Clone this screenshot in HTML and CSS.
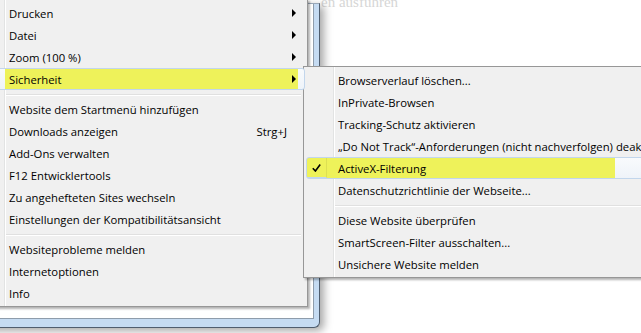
FILE: index.html
```html
<!DOCTYPE html>
<html lang="de">
<head>
  <meta charset="UTF-8" />
  <title>Extras – Sicherheit</title>
  <link rel="stylesheet" href="styles.css">
</head>
<body>
  <span class="behind">en ausführen</span>

  <!-- Fenster hinter dem Menü -->
  <div class="window"><div class="client"></div></div>

  <ul class="menu main">
    <li class="item">Drucken<span class="arrow"></span></li>
    <li class="item">Datei<span class="arrow"></span></li>
    <li class="item">Zoom (100 %)<span class="arrow"></span></li>
    <li class="item hot">Sicherheit<span class="arrow"></span></li>
    <li class="sep"></li>
    <li class="item">Website dem Startmenü hinzufügen</li>
    <li class="item">Downloads anzeigen<span class="key">Strg+J</span></li>
    <li class="item">Add-Ons verwalten</li>
    <li class="item">F12 Entwicklertools</li>
    <li class="item">Zu angehefteten Sites wechseln</li>
    <li class="item">Einstellungen der Kompatibilitätsansicht</li>
    <li class="sep"></li>
    <li class="item">Websiteprobleme melden</li>
    <li class="item">Internetoptionen</li>
    <li class="item">Info</li>
  </ul>

  <ul class="menu sub">
    <li class="item">Browserverlauf löschen...</li>
    <li class="item">InPrivate-Browsen</li>
    <li class="item">Tracking-Schutz aktivieren</li>
    <li class="item">„Do Not Track“-Anforderungen (nicht nachverfolgen) deaktivieren</li>
    <li class="item hot checked">
      <span class="check">
        <svg width="9" height="8" viewBox="0 0 9 8"><path d="M0.8 4.2 L3.4 7 L8.2 0.6" fill="none" stroke="#000" stroke-width="1.6"/></svg>
      </span>ActiveX-Filterung
    </li>
    <li class="item">Datenschutzrichtlinie der Webseite...</li>
    <li class="sep"></li>
    <li class="item">Diese Website überprüfen</li>
    <li class="item">SmartScreen-Filter ausschalten...</li>
    <li class="item">Unsichere Website melden</li>
  </ul>
</body>
</html>
```

FILE: styles.css
```css
body {
  margin: 0;
  width: 641px;
  height: 333px;
  overflow: hidden;
  position: relative;
  background: #fff;
  font-family: "Open Sans", "Noto Sans", sans-serif;
  font-size: 11.3px;
  color: #000;
}
.behind {
  position: absolute;
  left: 321px;
  top: -6px;
  font-family: "Liberation Serif", serif;
  font-size: 15px;
  color: #d6d6d6;
}
.window {
  position: absolute;
  left: -30px;
  top: 3px;
  width: 350px;
  height: 325px;
  box-sizing: border-box;
  border: 1px solid #4f5d6e;
  border-top-color: #9aa8b8;
  border-radius: 0 0 6px 6px;
  padding: 0 5px 8px 5px;
  background: #c5dbf2;
  box-shadow: 4px 3px 9px rgba(0, 0, 0, 0.35);
}
.client {
  height: 100%;
  box-sizing: border-box;
  border: 1px solid #8e9cab;
  border-top: none;
  background: #fff;
}
.menu {
  position: absolute;
  margin: 0;
  padding: 2px;
  list-style: none;
  box-sizing: border-box;
  border: 1px solid #979797;
  background: #f0f0f0;
  box-shadow: 2px 2px 2px rgba(0, 0, 0, 0.3);
}
.menu::before {
  content: "";
  position: absolute;
  left: 29px;
  top: 0;
  bottom: 0;
  border-left: 1px solid #e2e3e3;
  border-right: 1px solid #fff;
}
.main {
  left: -26px;
  top: -1px;
  width: 334px;
}
.sub {
  left: 303px;
  top: 66px;
  width: 420px;
}
.item {
  position: relative;
  display: flex;
  align-items: center;
  height: 22px;
  box-sizing: border-box;
  border: 1px solid transparent;
  padding: 0 8px 0 31px;
  white-space: nowrap;
}
.arrow {
  margin-left: auto;
  width: 0;
  height: 0;
  border-left: 4px solid #000;
  border-top: 4px solid transparent;
  border-bottom: 4px solid transparent;
}
.key {
  margin-left: auto;
  margin-right: 9px;
}
.sep {
  height: 8px;
  box-sizing: border-box;
  padding-top: 4px;
  margin: 0 4px 0 28px;
}
.sep::before {
  content: "";
  display: block;
  border-top: 1px solid #e0e0e0;
  border-bottom: 1px solid #fff;
}
.hot {
  z-index: 1;
  border-color: #c2d6ec;
  border-radius: 3px;
  background-origin: border-box;
  background-image:
    linear-gradient(to right, transparent 28px, #eef25a 28px, #eef25a 321px, transparent 321px),
    linear-gradient(#f9fbfd, #eef3f9);
}
.sub .hot {
  background-image:
    linear-gradient(to right, transparent 1px, #eef25a 1px, #eef25a 309px, transparent 309px),
    linear-gradient(#f9fbfd, #eef3f9);
}
.checked {
  padding-left: 0;
}
.check {
  display: flex;
  align-items: center;
  justify-content: center;
  width: 20px;
  height: 20px;
  box-sizing: border-box;
  margin-right: 11px;
  border-right: 1px solid rgba(0, 0, 0, 0.07);
  border-bottom: 1px solid #c2d6ec;
}
```
